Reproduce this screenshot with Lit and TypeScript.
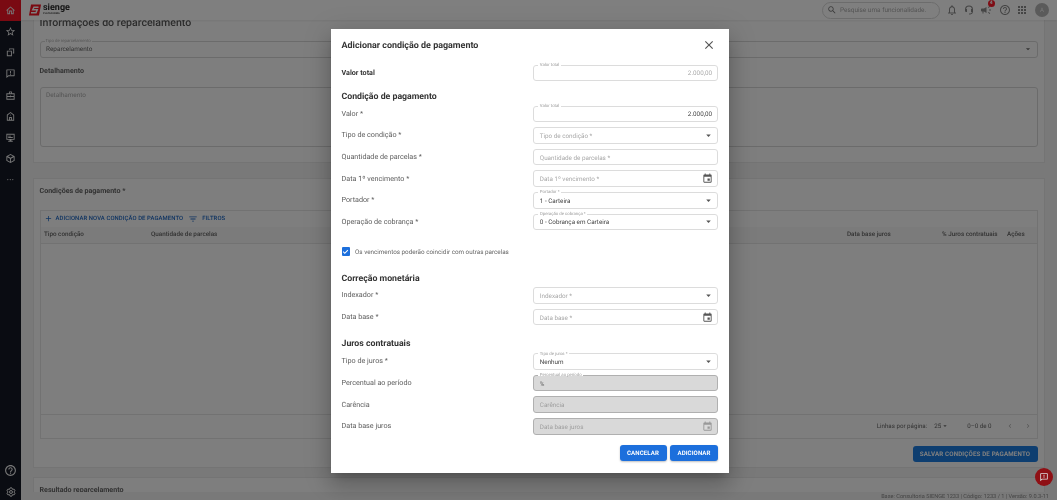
import { LitElement, html, css, svg } from "lit";
import { customElement } from "lit/decorators.js";

const P = {
  home: "M12 5.69l5 4.5V18h-2v-6H9v6H7v-7.81l5-4.5M12 3L2 12h3v8h6v-6h2v6h6v-8h3L12 3z",
  star: "M22 9.24l-7.19-.62L12 2 9.19 8.63 2 9.24l5.46 4.73L5.82 21 12 17.27 18.18 21l-1.63-7.03L22 9.24zM12 15.4l-3.76 2.27 1-4.28-3.32-2.88 4.38-.38L12 6.1l1.71 4.04 4.38.38-3.32 2.88 1 4.28L12 15.4z",
  search: "M15.5 14h-.79l-.28-.27C15.41 12.59 16 11.11 16 9.5 16 5.91 13.09 3 9.5 3S3 5.91 3 9.5 5.91 16 9.5 16c1.61 0 3.09-.59 4.23-1.57l.27.28v.79l5 4.99L20.49 19l-4.99-5zm-6 0C7.01 14 5 11.99 5 9.5S7.01 5 9.5 5 14 7.01 14 9.5 11.99 14 9.5 14z",
  help: "M11 18h2v-2h-2v2zm1-16C6.48 2 2 6.48 2 12s4.48 10 10 10 10-4.48 10-10S17.52 2 12 2zm0 18c-4.41 0-8-3.59-8-8s3.59-8 8-8 8 3.59 8 8-3.59 8-8 8zm0-14c-2.21 0-4 1.79-4 4h2c0-1.1.9-2 2-2s2 .9 2 2c0 2-3 1.75-3 5h2c0-2.25 3-2.5 3-5 0-2.21-1.79-4-4-4z",
  bell: "M12 22c1.1 0 2-.9 2-2h-4c0 1.1.9 2 2 2zm6-6v-5c0-3.07-1.63-5.64-4.5-6.32V4c0-.83-.67-1.5-1.5-1.5s-1.5.67-1.5 1.5v.68C7.64 5.36 6 7.92 6 11v5l-2 2v1h16v-1l-2-2zm-2 1H8v-6c0-2.48 1.51-4.5 4-4.5s4 2.02 4 4.5v6z",
  apps: "M4 8h4V4H4v4zm6 12h4v-4h-4v4zm-6 0h4v-4H4v4zm0-6h4v-4H4v4zm6 0h4v-4h-4v4zm6-10v4h4V4h-4zm-6 4h4V4h-4v4zm6 6h4v-4h-4v4zm0 6h4v-4h-4v4z",
  event: "M17 12h-5v5h5v-5zM16 1v2H8V1H6v2H5c-1.11 0-1.99.9-1.99 2L3 19c0 1.1.89 2 2 2h14c1.1 0 2-.9 2-2V5c0-1.1-.9-2-2-2h-1V1h-2zm3 18H5V8h14v11z",
  close: "M19 6.41L17.59 5 12 10.59 6.41 5 5 6.41 10.59 12 5 17.59 6.41 19 12 13.41 17.59 19 19 17.59 13.41 12z",
  filter: "M10 18h4v-2h-4v2zM3 6v2h18V6H3zm3 7h12v-2H6v2z",
  add: "M19 13h-6v6h-2v-6H5v-2h6V5h2v6h6v2z",
  caret: "M7 10l5 5 5-5z",
  left: "M15.41 7.41L14 6l-6 6 6 6 1.41-1.41L10.83 12z",
  right: "M10 6L8.59 7.41 13.17 12l-4.58 4.59L10 18l6-6z",
  megaphone: "M18 11v2h4v-2h-4zm-2 6.61c.96.71 2.21 1.65 3.2 2.39.4-.53.8-1.07 1.2-1.6-.99-.74-2.24-1.68-3.2-2.4-.4.54-.8 1.08-1.2 1.61zM20.4 5.6c-.4-.53-.8-1.07-1.2-1.6-.99.74-2.24 1.68-3.2 2.4.4.53.8 1.07 1.2 1.6.96-.72 2.21-1.65 3.2-2.4zM4 9c-1.1 0-2 .9-2 2v2c0 1.1.9 2 2 2h1v4h2v-4h1l5 3V6L8 9H4z",
  headset: "M12 3a8 8 0 0 0-8 8v2.5A2.5 2.5 0 0 0 6.5 16H8v-6H6.1a6 6 0 0 1 11.8 0H16v6h1.9a4 4 0 0 1-3.4 3H12v2h2.5a6 6 0 0 0 5.5-5.2V11a8 8 0 0 0-8-8z",
  cubes: "M9 3h11v11h-3v-2h1V5h-7v1H9V3zM4 8h11v12H4V8zm2 2v8h7v-8H6z",
  chat: "M4 3h16a1 1 0 0 1 1 1v13a1 1 0 0 1-1 1H8l-5 4V4a1 1 0 0 1 1-1zm1 2v12.5L7.5 16H19V5H5zM11 6.5h2v5h-2zM11 12.5h2v2h-2z",
  bag: "M9 3h6v4h6v14H3V7h6V3zm2 2v2h2V5h-2zM5 9v4h14V9H5zm0 6v4h14v-4H5zm6-3h2v4h-2z",
  bank: "M12 2l8 6v13H4V8l8-6zm0 2.5L6 9v10h3v-6h6v6h3V9l-6-4.5zM11 15v4h2v-4h-2zM11 8h2v2h-2z",
  monitor: "M3 4h18v13h-7v2h3v2H7v-2h3v-2H3V4zm2 2v9h14V6H5zm2 2h6v2H7zm0 3h10v2H7z",
  box: "M12 2l9 5v10l-9 5-9-5V7l9-5zm0 2.3L6.6 7.3 12 10.3l5.4-3L12 4.3zM5 9v6.8l6 3.3v-6.8L5 9zm14 0l-6 3.3v6.8l6-3.3V9z",
  gear: "M19.43 12.98c.04-.32.07-.64.07-.98s-.03-.66-.07-.98l2.11-1.65c.19-.15.24-.42.12-.64l-2-3.46c-.12-.22-.39-.3-.61-.22l-2.49 1c-.52-.4-1.08-.73-1.69-.98l-.38-2.65C14.46 2.18 14.25 2 14 2h-4c-.25 0-.46.18-.49.42l-.38 2.65c-.61.25-1.17.59-1.69.98l-2.49-1c-.23-.09-.49 0-.61.22l-2 3.46c-.13.22-.07.49.12.64l2.11 1.65c-.04.32-.07.65-.07.98s.03.66.07.98l-2.11 1.65c-.19.15-.24.42-.12.64l2 3.46c.12.22.39.3.61.22l2.49-1c.52.4 1.08.73 1.69.98l.38 2.65c.03.24.24.42.49.42h4c.25 0 .46-.18.49-.42l.38-2.65c.61-.25 1.17-.59 1.69-.98l2.49 1c.23.09.49 0 .61-.22l2-3.46c.12-.22.07-.49-.12-.64l-2.11-1.65z",
};

const icon = (d: string, cls = "") =>
  html`<svg class="ic ${cls}" viewBox="0 0 24 24" aria-hidden="true">${svg`<path d=${d}></path>`}</svg>`;

interface F {
  label: string;
  notch?: string;
  value?: string;
  hint?: string;
  end?: "caret" | "event";
  right?: boolean;
  off?: boolean;
}

const row1: F[] = [
  { label: "Valor *", notch: "Valor total", value: "2.000,00", right: true },
  { label: "Tipo de condição *", hint: "Tipo de condição *", end: "caret" },
  { label: "Quantidade de parcelas *", hint: "Quantidade de parcelas *" },
  { label: "Data 1º vencimento *", hint: "Data 1º vencimento *", end: "event" },
  { label: "Portador *", notch: "Portador *", value: "1 - Carteira", end: "caret" },
  { label: "Operação de cobrança *", notch: "Operação de cobrança *", value: "0 - Cobrança em Carteira", end: "caret" },
];
const row2: F[] = [
  { label: "Indexador *", hint: "Indexador *", end: "caret" },
  { label: "Data base *", hint: "Data base *", end: "event" },
];
const row3: F[] = [
  { label: "Tipo de juros *", notch: "Tipo de juros *", value: "Nenhum", end: "caret" },
  { label: "Percentual ao período", notch: "Percentual ao período", value: "%", off: true },
  { label: "Carência", hint: "Carência", off: true },
  { label: "Data base juros", hint: "Data base juros", end: "event", off: true },
];

const sideTop = [P.star, P.cubes, P.chat, P.bag, P.bank, P.monitor, P.box];

@customElement("app-root")
export class AppRoot extends LitElement {
  static styles = css`
    :host {
      display: block;
      position: relative;
      width: 1057px;
      height: 500px;
      overflow: hidden;
      font-family: Roboto, "Liberation Sans", sans-serif;
      color: #555;
      text-rendering: geometricPrecision;
    }
    * { box-sizing: border-box; }
    .ic { display: block; fill: currentColor; flex: none; }
    .page { display: flex; height: 500px; background: #f3f3f3; filter: blur(0.45px); will-change: transform; }

    .side { width: 21px; flex: none; background: #141824; color: #f0f0f0; display: flex; flex-direction: column; }
    .side .cell { height: 21.3px; flex: none; display: flex; align-items: center; justify-content: center; }
    .side .cell .ic { width: 11px; height: 11px; }
    .side .homecell { height: 20.5px; background: #f41424; }
    .side .dots { color: #ddd; font-size: 7px; letter-spacing: 0.4px; line-height: 1; font-weight: 700; }
    .side .spacer { flex: 1; }
    .side .cell.big { height: 21px; margin-bottom: 2px; }
    .side .big .ic { width: 13px; height: 13px; }
    .side .cell.cog { height: 17px; }
    .side .cog svg { fill: none; stroke: currentColor; stroke-width: 2.4; width: 10px; height: 10px; }

    .col { flex: 1; min-width: 0; display: flex; flex-direction: column; }
    .top { height: 20px; flex: none; background: #fff; display: flex; align-items: center; padding: 0 8px; z-index: 1; box-shadow: 0 1px 2px rgba(0,0,0,.08); }
    .logo { display: flex; align-items: center; gap: 2px; }
    .logo svg { width: 12px; height: 12px; display: block; }
    .brand { display: flex; flex-direction: column; color: #2a2a2a; font-weight: 700; font-size: 9px; line-height: 8px; margin-top: -1px; }
    .brand small { font-size: 2.6px; line-height: 3px; font-weight: 500; }
    .grow { flex: 1; }
    .search { width: 118px; height: 17px; border: 1px solid #d8d8d8; border-radius: 9px; display: flex; align-items: center; gap: 3px; padding-left: 4px; margin-right: 6px; color: #aaa; font-size: 6.45px; }
    .search .ic { width: 10px; height: 10px; color: #777; }
    .tool { width: 12px; height: 12px; color: #8a8a8a; position: relative; margin-right: 5px; }
    .tool .ic { width: 12px; height: 12px; }
    .tool.wide { margin-right: 7px; }
    .badge { position: absolute; top: -4.5px; right: -3px; width: 7.5px; height: 7.5px; border-radius: 50%; background: #ff1828; color: #fff; font-size: 5px; font-weight: 700; display: flex; align-items: center; justify-content: center; }
    .avatar { width: 14px; height: 14px; border-radius: 50%; background: #b5b5b5; color: #eee; font-size: 6px; display: flex; align-items: center; justify-content: center; }

    .main { flex: 1; min-height: 0; overflow: hidden; padding: 0 12px; }
    .card { background: #fdfdfd; border: 1px solid #e8e8e8; border-top: 0; padding: 0 6.5px 0 5.5px; }
    .c1 { height: 143px; display: flow-root; }
    .c2 { height: 290px; margin-top: 15px; border-top: 1px solid #e8e8e8; padding-top: 4.5px; display: flex; flex-direction: column; }
    .c3 { height: 40px; margin-top: 9px; border-top: 1px solid #e8e8e8; padding-top: 4.5px; }
    .h1 { margin: -4px 0 11px; font-size: 10.6px; line-height: 14px; font-weight: 500; color: #5a5a5a; }
    .h2 { font-size: 7.1px; line-height: 14px; font-weight: 700; color: #666; }
    .bgfield { height: 16.6px; border: 1px solid #d6d6d6; border-radius: 3px; position: relative; display: flex; align-items: center; padding: 0 4px 0 5.5px; font-size: 6.4px; color: #666; }
    .bgfield .ic { width: 10px; height: 10px; color: #666; margin-left: auto; }
    .bgfield .tag { position: absolute; left: 4px; top: -3px; padding: 0 1px; font-size: 4.3px; background: #fdfdfd; color: #aaa; line-height: 5px; }
    .h2.sp { margin-top: 6.5px; }
    .area { margin-top: 9px; height: 59.5px; border: 1px solid #d6d6d6; border-radius: 3px; padding: 3px 5.5px; font-size: 6.4px; color: #aaa; }

    .table { margin-top: 12px; height: 229px; border: 1px solid #e4e4e4; display: flex; flex-direction: column; flex: none; }
    .tbar { height: 16px; flex: none; display: flex; align-items: center; padding-left: 3.5px; color: #2069c4; font-size: 5.9px; font-weight: 500; letter-spacing: 0.1px; }
    .tbar .ic { width: 9px; height: 9px; margin-right: 2.5px; }
    .tbar .ic.f { width: 10px; height: 10px; margin-left: 5px; margin-right: 4px; }
    .thead { height: 17.5px; flex: none; background: #f6f6f6; border-bottom: 1px solid #e4e4e4; display: grid; grid-template-columns: 107px 176px 520px 95px 65px 1fr; align-items: center; padding: 0 0 1px 3.5px; font-size: 6.3px; font-weight: 500; color: #666; }
    .tbody { flex: 1; }
    .tfoot { height: 24px; flex: none; border-top: 1px solid #e4e4e4; display: flex; align-items: center; justify-content: flex-end; font-size: 6.2px; color: #666; padding-right: 5px; }
    .tfoot .ic { width: 8px; height: 8px; }
    .tfoot .pg { margin-left: 7px; }
    .tfoot .n { margin-left: 18px; }
    .tfoot .prev { margin-left: 14px; color: #aaa; }
    .tfoot .next { margin-left: 10px; color: #aaa; }
    .saverow { margin-top: 7.5px; display: flex; justify-content: flex-end; }
    .save { height: 16px; width: 125px; border-radius: 3px; background: #1c7ce0; color: #fff; font-size: 6.2px; font-weight: 700; display: flex; align-items: center; justify-content: center; letter-spacing: 0.15px; }

    .foot { height: 8px; flex: none; background: #f3f3f3; text-align: right; padding-right: 8px; font-size: 5.6px; line-height: 10px; color: #888; z-index: 1; }

    .veil { position: absolute; inset: 0; background: rgba(0,0,0,.5); }
    .fab { position: absolute; left: 1035px; top: 468px; width: 18px; height: 18px; border-radius: 50%; background: #8f1015; color: #ddd; display: flex; align-items: center; justify-content: center; filter: blur(0.3px); }
    .fab .ic { width: 10px; height: 10px; }

    .dialog { position: absolute; left: 331px; top: 29px; width: 397.5px; height: 443.5px; background: #fff; padding: 0 10.5px; display: flex; flex-direction: column; filter: blur(0.35px); will-change: transform;
      box-shadow: 0 6px 9px -4px rgba(0,0,0,.2), 0 13px 20px 2px rgba(0,0,0,.14), 0 5px 25px 4px rgba(0,0,0,.12); }
    .dhead { height: 32px; flex: none; display: flex; align-items: center; justify-content: space-between; }
    .title { font-size: 8.95px; font-weight: 700; color: #333; padding-top: 1px; }
    .x { width: 14px; height: 14px; color: #555; margin-right: 2px; }
    .sec { display: flex; flex-direction: column; gap: 5px; flex: none; }
    .row { display: grid; grid-template-columns: 191.3px 1fr; align-items: center; }
    .lab { font-size: 7.2px; color: #5c5c5c; margin-top: -1.2px; }
    .lab.strong { font-weight: 700; color: #333; }
    .field { height: 16.6px; border: 1px solid #dcdcdc; border-radius: 3px; position: relative; display: flex; align-items: center; padding: 0 5px 0 6px; font-size: 6.3px; color: #444; background: #fff; }
    .field .v { flex: 1; white-space: nowrap; padding-top: 1px; }
    .field .v.r { text-align: right; }
    .field .v.ph { color: #a9a9a9; }
    .field .v.mute { color: #aaa; }
    .field .ic.car { width: 11px; height: 11px; color: #555; margin-right: -2px; }
    .field .ic.cal { width: 11px; height: 11px; color: #555; margin-right: -0.5px; }
    .field .tag { position: absolute; left: 4.5px; top: -2.6px; padding: 0 1.5px; font-size: 4.3px; line-height: 5px; color: #999; background: #fff; }
    .field.off { background: #d9d9d9; border-color: #b0b0b0; }
    .field.off .tag { background: linear-gradient(#fff 50%, #d9d9d9 50%); }
    .field.off .v.ph { color: #9f9f9f; }
    .field.off .v { color: #666; }
    .field.off .ic.cal { color: #999; }
    .hd { height: 14px; line-height: 14px; font-size: 8.75px; font-weight: 700; color: #333; flex: none; }
    .m1 { margin-top: 3.5px; }
    .m2 { margin-top: 9px; margin-bottom: 1.5px; }
    .m3 { margin-top: 16.5px; height: 10px; display: flex; align-items: center; gap: 5px; flex: none; font-size: 6.3px; color: #666; }
    .cb { width: 8.5px; height: 8.5px; border-radius: 1px; background: #1c6fdc; flex: none; display: flex; align-items: center; justify-content: center; }
    .cb svg { width: 7px; height: 7px; display: block; }
    .m4 { margin-top: 15px; margin-bottom: 1.5px; }
    .m5 { margin-top: 12px; margin-bottom: 1.8px; }
    .acts { margin-top: 10.5px; display: flex; justify-content: flex-end; gap: 3.5px; flex: none; }
    .btn { height: 16.4px; border-radius: 3px; background: #1c6fdc; color: #fff; font-size: 6.1px; font-weight: 700; display: flex; align-items: center; justify-content: center; letter-spacing: 0.1px; box-shadow: 0 1px 2px rgba(0,0,0,.25); }
    .btn.a { width: 47px; }
    .btn.b { width: 48px; }
  `;

  private field(f: F) {
    const end =
      f.end === "caret" ? icon(P.caret, "car") : f.end === "event" ? icon(P.event, "cal") : null;
    const shown = f.value ?? f.hint ?? "";
    const cls = `v ${f.right ? "r" : ""} ${f.value ? "" : "ph"}`;
    return html`<div class="field ${f.off ? "off" : ""}">
      ${f.notch ? html`<span class="tag">${f.notch}</span>` : null}
      <span class=${cls}>${shown}</span>${end}
    </div>`;
  }

  private rows(list: F[]) {
    return html`<div class="sec">
      ${list.map((f) => html`<div class="row"><span class="lab">${f.label}</span>${this.field(f)}</div>`)}
    </div>`;
  }

  render() {
    return html`
      <div class="page">
        <nav class="side">
          <div class="cell homecell">${icon(P.home)}</div>
          ${sideTop.map((d) => html`<div class="cell">${icon(d)}</div>`)}
          <div class="cell"><span class="dots">···</span></div>
          <div class="spacer"></div>
          <div class="cell big">${icon(P.help)}</div>
          <div class="cell cog"><svg viewBox="0 0 24 24" aria-hidden="true"><path d=${P.gear}></path><circle cx="12" cy="12" r="3.5"></circle></svg></div>
        </nav>
        <div class="col">
          <header class="top">
            <div class="logo">
              <svg viewBox="0 0 24 24"><path fill="#f41424" d="M4 1h20l-4 22H0z"></path><path fill="none" stroke="#fff" stroke-width="3" d="M19 6.5H10L7.5 11.5h9L14 17.5H4"></path></svg>
              <div class="brand">sienge<small>PLATAFORMA</small></div>
            </div>
            <div class="grow"></div>
            <div class="search">${icon(P.search)}<span>Pesquise uma funcionalidade.</span></div>
            <div class="tool">${icon(P.bell)}</div>
            <div class="tool">${icon(P.headset)}</div>
            <div class="tool wide">${icon(P.megaphone)}<span class="badge">4</span></div>
            <div class="tool">${icon(P.help)}</div>
            <div class="tool wide">${icon(P.apps)}</div>
            <div class="avatar">A</div>
          </header>
          <main class="main">
            <section class="card c1">
              <div class="h1">Informações do reparcelamento</div>
              <div class="bgfield"><span class="tag">Tipo de reparcelamento</span>Reparcelamento${icon(P.caret)}</div>
              <div class="h2 sp">Detalhamento</div>
              <div class="area">Detalhamento</div>
            </section>
            <section class="card c2">
              <div class="h2">Condições de pagamento *</div>
              <div class="table">
                <div class="tbar">${icon(P.add)}<span>ADICIONAR NOVA CONDIÇÃO DE PAGAMENTO</span>${icon(P.filter, "f")}<span>FILTROS</span></div>
                <div class="thead"><span>Tipo condição</span><span>Quantidade de parcelas</span><span></span><span>Data base juros</span><span>% Juros contratuais</span><span>Ações</span></div>
                <div class="tbody"></div>
                <div class="tfoot">
                  <span>Linhas por página:</span><span class="pg">25</span>${icon(P.caret)}<span class="n">0–0 de 0</span>
                  <span class="prev">${icon(P.left)}</span><span class="next">${icon(P.right)}</span>
                </div>
              </div>
              <div class="saverow"><div class="save">SALVAR CONDIÇÕES DE PAGAMENTO</div></div>
            </section>
            <section class="card c3"><div class="h2">Resultado reparcelamento</div></section>
          </main>
          <footer class="foot">Base: Consultoria SIENGE 1233 | Código: 1233 / 1 | Versão: 9.0.3-11</footer>
        </div>
      </div>
      <div class="veil"></div>
      <div class="fab">${icon(P.chat)}</div>
      <div class="dialog" role="dialog">
        <div class="dhead"><span class="title">Adicionar condição de pagamento</span>${icon(P.close, "x")}</div>
        <div class="sec m1">
          <div class="row"><span class="lab strong">Valor total</span>
            <div class="field"><span class="tag">Valor total</span><span class="v r mute">2.000,00</span></div>
          </div>
        </div>
        <div class="hd m2">Condição de pagamento</div>
        ${this.rows(row1)}
        <div class="m3"><span class="cb"><svg viewBox="0 0 24 24"><path fill="none" stroke="#fff" stroke-width="3.5" d="M4 12.5l5.5 5.5L20 7"></path></svg></span>Os vencimentos poderão coincidir com outras parcelas</div>
        <div class="hd m4">Correção monetária</div>
        ${this.rows(row2)}
        <div class="hd m5">Juros contratuais</div>
        ${this.rows(row3)}
        <div class="acts"><div class="btn a">CANCELAR</div><div class="btn b">ADICIONAR</div></div>
      </div>
    `;
  }
}
